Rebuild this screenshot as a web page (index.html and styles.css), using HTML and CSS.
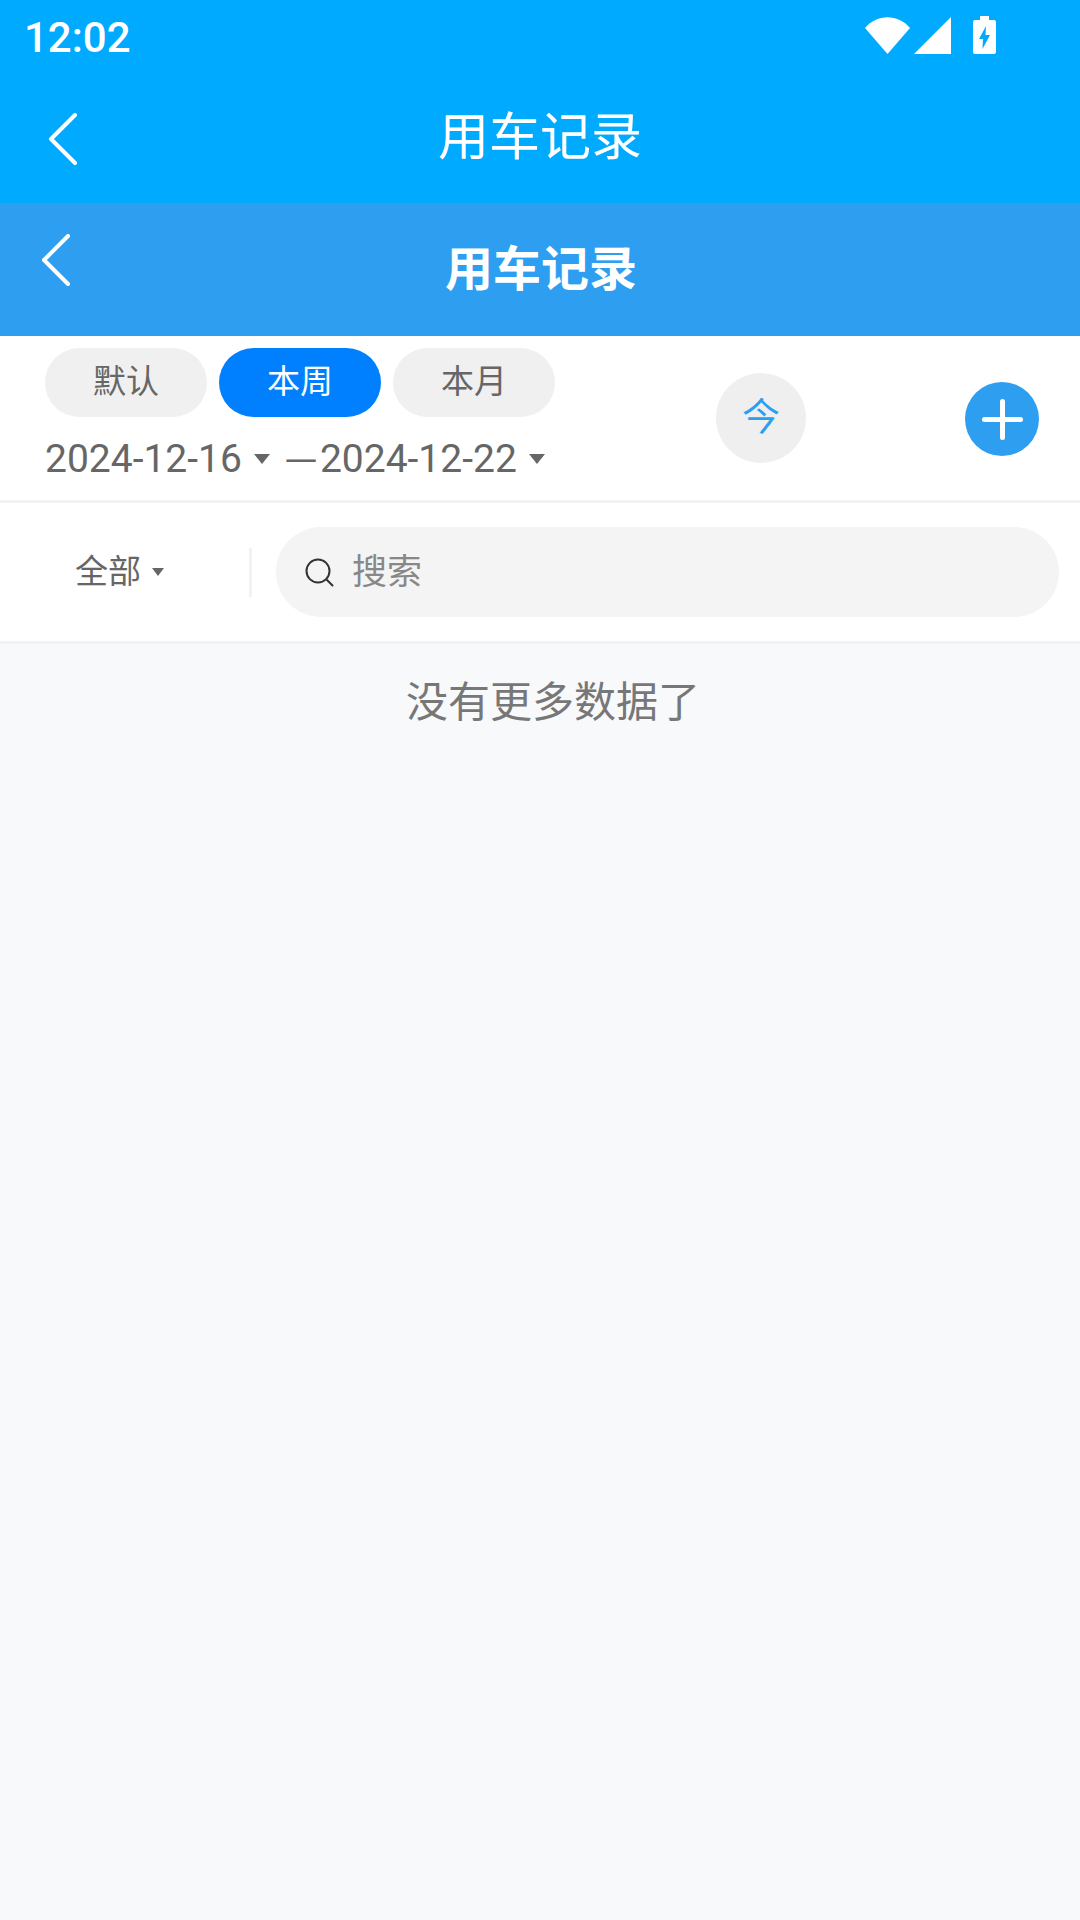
FILE: index.html
```html
<!DOCTYPE html>
<html lang="en">
<head>
  <meta charset="UTF-8">
  <meta name="viewport" content="width=device-width, initial-scale=1.0">
  <title>用车记录</title>
  <link rel="stylesheet" href="styles.css">
</head>
<body>

  <!-- system bar and native title -->
  <div class="app-header">
    <div class="status-bar">
      <span class="time">12:02</span>
      <div class="status-icons">
        <svg class="icon-wifi" width="45" height="37" viewBox="0 0 45 37"><path d="M0 11 C12 -3.5 33 -3.5 45 11 L22.5 37 Z" fill="#fff"/></svg>
        <svg class="icon-signal" width="37" height="37" viewBox="0 0 37 37"><path d="M37 0 V37 H0 Z" fill="#fff"/></svg>
        <svg class="icon-battery" width="23" height="38" viewBox="0 0 23 38"><path d="M7 0 H16 V4 H21 Q23 4 23 6 V36 Q23 38 21 38 H2 Q0 38 0 36 V6 Q0 4 2 4 H7 Z M13 10 L6 23 H10 L9.5 33 L17 19 H12.5 Z" fill="#fff" fill-rule="evenodd"/></svg>
      </div>
    </div>
    <div class="native-title">
      <svg class="back" width="30" height="52" viewBox="0 0 30 52"><path d="M27 2 L3 26 L27 50" fill="none" stroke="#fff" stroke-width="4" stroke-linecap="round" stroke-linejoin="round"/></svg>
      <h1>用车记录</h1>
    </div>
  </div>

  <!-- page title -->
  <div class="page-title">
    <svg class="back" width="30" height="52" viewBox="0 0 30 52"><path d="M27 2 L3 26 L27 50" fill="none" stroke="#fff" stroke-width="4" stroke-linecap="round" stroke-linejoin="round"/></svg>
    <h2>用车记录</h2>
  </div>

  <!-- date filters -->
  <div class="filter-bar">
    <div class="filter-left">
      <div class="pills">
        <div class="pill">默认</div>
        <div class="pill active">本周</div>
        <div class="pill">本月</div>
      </div>
      <div class="dates">
        <span>2024-12-16</span>
        <i class="arrow"></i>
        <span class="dash">一</span>
        <span>2024-12-22</span>
        <i class="arrow"></i>
      </div>
    </div>
    <div class="today">今</div>
    <div class="add">
      <svg width="41" height="41" viewBox="0 0 41 41"><path d="M20.5 2.5 V38.5 M2.5 20.5 H38.5" fill="none" stroke="#fff" stroke-width="5" stroke-linecap="round"/></svg>
    </div>
  </div>

  <!-- search -->
  <div class="search-bar">
    <div class="category">
      <span>全部</span>
      <i class="arrow small"></i>
    </div>
    <div class="search-box">
      <svg width="29" height="29" viewBox="0 0 29 29"><path d="M13 1.5 A11.5 11.5 0 1 0 13 24.5 A11.5 11.5 0 1 0 13 1.5 Z M21.5 21.5 L27.5 27.5" fill="none" stroke="#333" stroke-width="2" stroke-linecap="round"/></svg>
      <span>搜索</span>
    </div>
  </div>

  <div class="no-more">没有更多数据了</div>

</body>
</html>
```

FILE: styles.css
```css
* {
  margin: 0;
  padding: 0;
  box-sizing: border-box;
}

body {
  width: 1080px;
  height: 1920px;
  overflow: hidden;
  font-family: "Noto Sans CJK SC", "Noto Sans", sans-serif;
  background-color: #f7f9fb;
  color: #666666;
}

.app-header {
  height: 203px;
  background-color: #00aaff;
  color: #ffffff;
}

.status-bar {
  height: 75px;
  padding: 16px 84px 0 24px;
  display: flex;
  justify-content: space-between;
  align-items: flex-start;
}

.time {
  font-family: Roboto, sans-serif;
  font-size: 42px;
  font-weight: 500;
  line-height: 44px;
}

.status-icons {
  display: flex;
  align-items: flex-end;
}

.icon-wifi {
  margin-right: 4px;
}

.icon-signal {
  margin-right: 22px;
}

.native-title {
  height: 128px;
  padding-left: 48px;
  display: flex;
  align-items: center;
  position: relative;
}

.native-title h1 {
  position: absolute;
  left: 0;
  right: 0;
  top: 23px;
  text-align: center;
  font-size: 51px;
  font-weight: 400;
  line-height: 70px;
}

.page-title {
  height: 133px;
  background-color: #2e9ff0;
  padding: 31px 0 0 41px;
  position: relative;
}

.page-title h2 {
  position: absolute;
  left: 2px;
  right: 0;
  top: 28px;
  text-align: center;
  color: #ffffff;
  font-size: 48px;
  font-weight: 700;
  line-height: 68px;
}

.filter-bar {
  height: 164px;
  background-color: #ffffff;
  display: flex;
  align-items: flex-start;
}

.filter-left {
  flex: 0 0 716px;
  padding: 12px 0 0 45px;
}

.pills {
  display: flex;
  gap: 12px;
}

.pill {
  width: 162px;
  height: 69px;
  border-radius: 35px;
  background-color: #f0f0f0;
  font-size: 33px;
  line-height: 62px;
  text-align: center;
}

.pill.active {
  background-color: #0080ff;
  color: #ffffff;
}

.dates {
  margin-top: 21px;
  height: 42px;
  display: flex;
  align-items: center;
  font-family: Roboto, "Noto Sans CJK SC", sans-serif;
  font-size: 39px;
  line-height: 42px;
}

.dash {
  font-family: "Noto Sans CJK SC", sans-serif;
  font-size: 32px;
  margin: 0 3px 0 15px;
}

.arrow {
  display: block;
  margin-left: 12px;
  border-style: solid;
  border-width: 10px 8px 0 8px;
  border-color: #666666 transparent transparent transparent;
}

.arrow.small {
  margin-left: 11px;
  border-width: 8px 6px 0 6px;
}

.today {
  width: 90px;
  height: 90px;
  margin-top: 37px;
  border-radius: 50%;
  background-color: #efefef;
  color: #2e9ff0;
  font-size: 38px;
  line-height: 82px;
  text-align: center;
}

.add {
  width: 74px;
  height: 74px;
  margin: 46px 0 0 159px;
  border-radius: 50%;
  background-color: #2e9ff0;
  display: flex;
  justify-content: center;
  align-items: center;
}

.search-bar {
  height: 144px;
  margin-top: 0;
  background-color: #ffffff;
  border-top: 3px solid #f2f2f2;
  border-bottom: 3px solid #f2f2f2;
  display: flex;
  align-items: center;
  padding-right: 21px;
}

.category {
  width: 252px;
  height: 49px;
  padding-left: 75px;
  border-right: 3px solid #f2f2f2;
  display: flex;
  align-items: center;
  font-size: 33px;
}

.category span {
  margin-top: -7px;
}

.search-box {
  margin-left: 24px;
  flex: 1;
  height: 90px;
  border-radius: 45px;
  background-color: #f4f4f4;
  padding-left: 29px;
  display: flex;
  align-items: center;
  color: #888888;
  font-size: 35px;
}

.search-box svg {
  margin-right: 18px;
}

.search-box span {
  margin-top: -7px;
}

.no-more {
  margin-top: 25px;
  padding-left: 26px;
  text-align: center;
  color: #777777;
  font-size: 42px;
  line-height: 60px;
}
```
